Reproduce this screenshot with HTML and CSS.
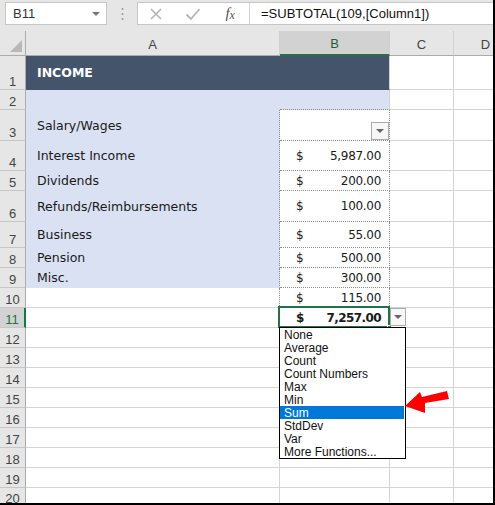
FILE: index.html
```html
<!DOCTYPE html>
<html lang="en">
<head>
    <meta charset="UTF-8">
    <title>Income - Total Row</title>
    <link rel="stylesheet" href="styles.css">
</head>
<body>
<div class="window">
    <div class="toolbar">
        <div class="name-box"><span>B11</span><span class="caret"></span></div>
        <div class="grip">
            <svg width="3" height="14" viewBox="0 0 3 14"><circle cx="1.5" cy="2" r="1" fill="#9a9a9a"/><circle cx="1.5" cy="7" r="1" fill="#9a9a9a"/><circle cx="1.5" cy="12" r="1" fill="#9a9a9a"/></svg>
        </div>
        <div class="formula">
            <div class="fx-tools">
                <div class="tool">
                    <svg width="14" height="14" viewBox="0 0 14 14"><path d="M2 2 L12 12 M12 2 L2 12" stroke="#b4b4b4" stroke-width="1.6" fill="none"/></svg>
                </div>
                <div class="tool">
                    <svg width="16" height="14" viewBox="0 0 16 14"><path d="M1.5 7.5 L6 12 L14.5 2" stroke="#b4b4b4" stroke-width="1.8" fill="none"/></svg>
                </div>
                <div class="tool fx">f<span>x</span></div>
            </div>
            <div class="formula-text">=SUBTOTAL(109,[Column1])</div>
        </div>
    </div>

    <div class="sheet">
        <!-- cabecalho de colunas -->
        <div class="ch corner"><svg width="14" height="14" viewBox="0 0 14 14"><polygon points="13,1 13,13 1,13" fill="#b8b8b8"/></svg></div>
        <div class="ch">A</div>
        <div class="ch sel">B</div>
        <div class="ch">C</div>
        <div class="ch">D</div>

        <div class="rh">1</div>
        <div class="c title">INCOME</div>
        <div class="c title-end"></div>
        <div class="c"></div><div class="c"></div>

        <div class="rh">2</div>
        <div class="c band"></div>
        <div class="c band band-b"></div>
        <div class="c"></div><div class="c"></div>

        <div class="rh">3</div>
        <div class="c band label">Salary/Wages</div>
        <div class="c amt dot"></div>
        <div class="c"></div><div class="c"></div>

        <div class="rh">4</div>
        <div class="c band label">Interest Income</div>
        <div class="c amt dot"><span>$</span><span>5,987.00</span></div>
        <div class="c"></div><div class="c"></div>

        <div class="rh">5</div>
        <div class="c band label">Dividends</div>
        <div class="c amt dot"><span>$</span><span>200.00</span></div>
        <div class="c"></div><div class="c"></div>

        <div class="rh">6</div>
        <div class="c band label">Refunds/Reimbursements</div>
        <div class="c amt dot"><span>$</span><span>100.00</span></div>
        <div class="c"></div><div class="c"></div>

        <div class="rh">7</div>
        <div class="c band label">Business</div>
        <div class="c amt dot"><span>$</span><span>55.00</span></div>
        <div class="c"></div><div class="c"></div>

        <div class="rh">8</div>
        <div class="c band label">Pension</div>
        <div class="c amt dot"><span>$</span><span>500.00</span></div>
        <div class="c"></div><div class="c"></div>

        <div class="rh">9</div>
        <div class="c band label">Misc.</div>
        <div class="c amt dot"><span>$</span><span>300.00</span></div>
        <div class="c"></div><div class="c"></div>

        <div class="rh">10</div>
        <div class="c edge"></div>
        <div class="c amt dot"><span>$</span><span>115.00</span></div>
        <div class="c"></div><div class="c"></div>

        <div class="rh sel">11</div>
        <div class="c"></div>
        <div class="c amt total"><span>$</span><span>7,257.00</span></div>
        <div class="c"></div><div class="c"></div>

        <div class="rh">12</div><div class="c"></div><div class="c"></div><div class="c"></div><div class="c"></div>
        <div class="rh">13</div><div class="c"></div><div class="c"></div><div class="c"></div><div class="c"></div>
        <div class="rh">14</div><div class="c"></div><div class="c"></div><div class="c"></div><div class="c"></div>
        <div class="rh">15</div><div class="c"></div><div class="c"></div><div class="c"></div><div class="c"></div>
        <div class="rh">16</div><div class="c"></div><div class="c"></div><div class="c"></div><div class="c"></div>
        <div class="rh">17</div><div class="c"></div><div class="c"></div><div class="c"></div><div class="c"></div>
        <div class="rh">18</div><div class="c"></div><div class="c"></div><div class="c"></div><div class="c"></div>
        <div class="rh">19</div><div class="c"></div><div class="c"></div><div class="c"></div><div class="c"></div>
        <div class="rh last">20</div><div class="c"></div><div class="c"></div><div class="c"></div><div class="c"></div>
    </div>

    <!-- elementos sobrepostos -->
    <div class="filter-btn"><span class="tri"></span></div>
    <div class="selection"><span class="fill-handle"></span></div>
    <div class="drop-btn"><span class="tri"></span></div>

    <ul class="dropdown">
        <li>None</li>
        <li>Average</li>
        <li>Count</li>
        <li>Count Numbers</li>
        <li>Max</li>
        <li>Min</li>
        <li class="active">Sum</li>
        <li>StdDev</li>
        <li>Var</li>
        <li>More Functions...</li>
    </ul>

    <svg class="arrow" width="52" height="32" viewBox="0 0 52 32">
        <polygon points="5,21 20,7 22,12 47,6 49,14 25,18 25,28" fill="#ff0000"/>
    </svg>
</div>
</body>
</html>
```

FILE: styles.css
```css
* {
    box-sizing: border-box;
}
body {
    margin: 0;
    background-color: #fff;
    font-family: "DejaVu Sans", sans-serif;
}
.window {
    position: relative;
    width: 495px;
    height: 505px;
    overflow: hidden;
    background-color: #e6e6e6;
    border-right: 2px solid #000;
    border-bottom: 2px solid #000;
}

/* barra de formula */
.toolbar {
    display: flex;
    align-items: flex-start;
    height: 31px;
    padding-top: 2px;
}
.name-box {
    margin-left: 5px;
    width: 102px;
    height: 23px;
    background-color: #fff;
    border: 1px solid #c6c6c6;
    display: flex;
    align-items: center;
    justify-content: space-between;
    padding: 0 6px 0 7px;
    font: 13px "Liberation Sans", sans-serif;
    color: #333;
}
.caret {
    border-left: 4px solid transparent;
    border-right: 4px solid transparent;
    border-top: 4px solid #777;
}
.grip {
    width: 30px;
    height: 23px;
    display: flex;
    align-items: center;
    justify-content: center;
}
.formula {
    flex: 1;
    display: flex;
    height: 23px;
    background-color: #fff;
    border: 1px solid #c6c6c6;
    border-right: none;
}
.fx-tools {
    display: flex;
    width: 112px;
    border-right: 1px solid #d4d4d4;
}
.tool {
    width: 37px;
    display: flex;
    align-items: center;
    justify-content: center;
}
.tool.fx {
    width: 38px;
    font: italic 15px "Liberation Serif", serif;
    color: #555;
}
.tool.fx span {
    font-size: 12px;
    margin-top: 3px;
}
.formula-text {
    padding-left: 11px;
    display: flex;
    align-items: center;
    font: 13px "Liberation Sans", sans-serif;
    color: #111;
}

/* planilha */
.sheet {
    display: grid;
    grid-template-columns: 26px 254px 110px 64px 64px;
    grid-template-rows: 25px 34px 20px 31px 30px 20px 31px 26px repeat(13, 20px);
    background-color: #fff;
}
.ch {
    background-color: #e6e6e6;
    border-right: 1px solid #d0d0d0;
    border-bottom: 1px solid #ababab;
    display: flex;
    align-items: center;
    justify-content: center;
    padding-top: 2px;
    font: 13px "Liberation Sans", sans-serif;
    color: #444;
}
.ch.corner {
    justify-content: flex-end;
    align-items: flex-end;
    padding: 0 2px 2px 0;
    border-right-color: #ababab;
}
.ch.sel {
    background-color: #d2d2d2;
    color: #1f5e3a;
    border-bottom: 2px solid #217346;
}
.rh {
    background-color: #e6e6e6;
    border-right: 1px solid #ababab;
    border-bottom: 1px solid #c6c6c6;
    display: flex;
    align-items: flex-end;
    justify-content: center;
    font: 13px/15px "Liberation Sans", sans-serif;
    color: #444;
}
.rh.last {
    align-items: flex-start;
    padding-top: 3px;
}
.rh.sel {
    background-color: #d2d2d2;
    color: #217346;
    border-right: 2px solid #217346;
}
.c {
    border-right: 1px solid #d4d4d4;
    border-bottom: 1px solid #d4d4d4;
    display: flex;
    align-items: center;
    white-space: nowrap;
    overflow: hidden;
    font-size: 12.5px;
    color: #1a1a1a;
}
.title {
    background-color: #44546a;
    border-color: #44546a;
    padding-left: 11px;
    color: #fff;
    font-weight: bold;
}
.title-end {
    background-color: #44546a;
    border-bottom-color: #44546a;
}
.band {
    background-color: #d9e1f2;
    border-color: #d9e1f2;
}
.band-b {
    border-bottom: 1px dotted #8c8c8c;
    border-right-color: #d4d4d4;
}
.label {
    padding-left: 11px;
    border-right: 1px dotted #8c8c8c;
}
.edge {
    border-right: 1px dotted #8c8c8c;
}
.amt {
    justify-content: space-between;
    padding: 0 8px 0 16px;
    font-size: 12px;
    letter-spacing: -0.3px;
}
.dot {
    border-right: 1px dotted #8c8c8c;
    border-bottom: 1px dotted #8c8c8c;
}
.total {
    font-weight: bold;
    letter-spacing: -0.6px;
}

/* botoes, selecao e lista */
.filter-btn, .drop-btn {
    position: absolute;
    background-color: #f7f7f7;
    border: 1px solid #ababab;
    display: flex;
    align-items: center;
    justify-content: center;
}
.filter-btn {
    left: 371px;
    top: 122px;
    width: 18px;
    height: 18px;
}
.drop-btn {
    left: 390px;
    top: 308px;
    width: 16px;
    height: 18px;
}
.tri {
    border-left: 4px solid transparent;
    border-right: 4px solid transparent;
    border-top: 4px solid #666;
}
.selection {
    position: absolute;
    left: 278px;
    top: 306px;
    width: 112px;
    height: 22px;
    border: 2px solid #217346;
}
.fill-handle {
    position: absolute;
    right: -4px;
    bottom: -4px;
    width: 5px;
    height: 5px;
    background-color: #217346;
    border: 1px solid #fff;
}
.dropdown {
    position: absolute;
    left: 279px;
    top: 327px;
    width: 127px;
    height: 132px;
    margin: 0;
    padding: 0;
    list-style: none;
    background-color: #fff;
    border: 1px solid #000;
    font: 12px/13px "Liberation Sans", sans-serif;
    color: #111;
}
.dropdown li {
    height: 13px;
    padding: 1px 0 0 4px;
    margin-right: 1px;
}
.dropdown li.active {
    background-color: #0078d7;
    color: #fff;
}
.arrow {
    position: absolute;
    left: 400px;
    top: 385px;
}
```
